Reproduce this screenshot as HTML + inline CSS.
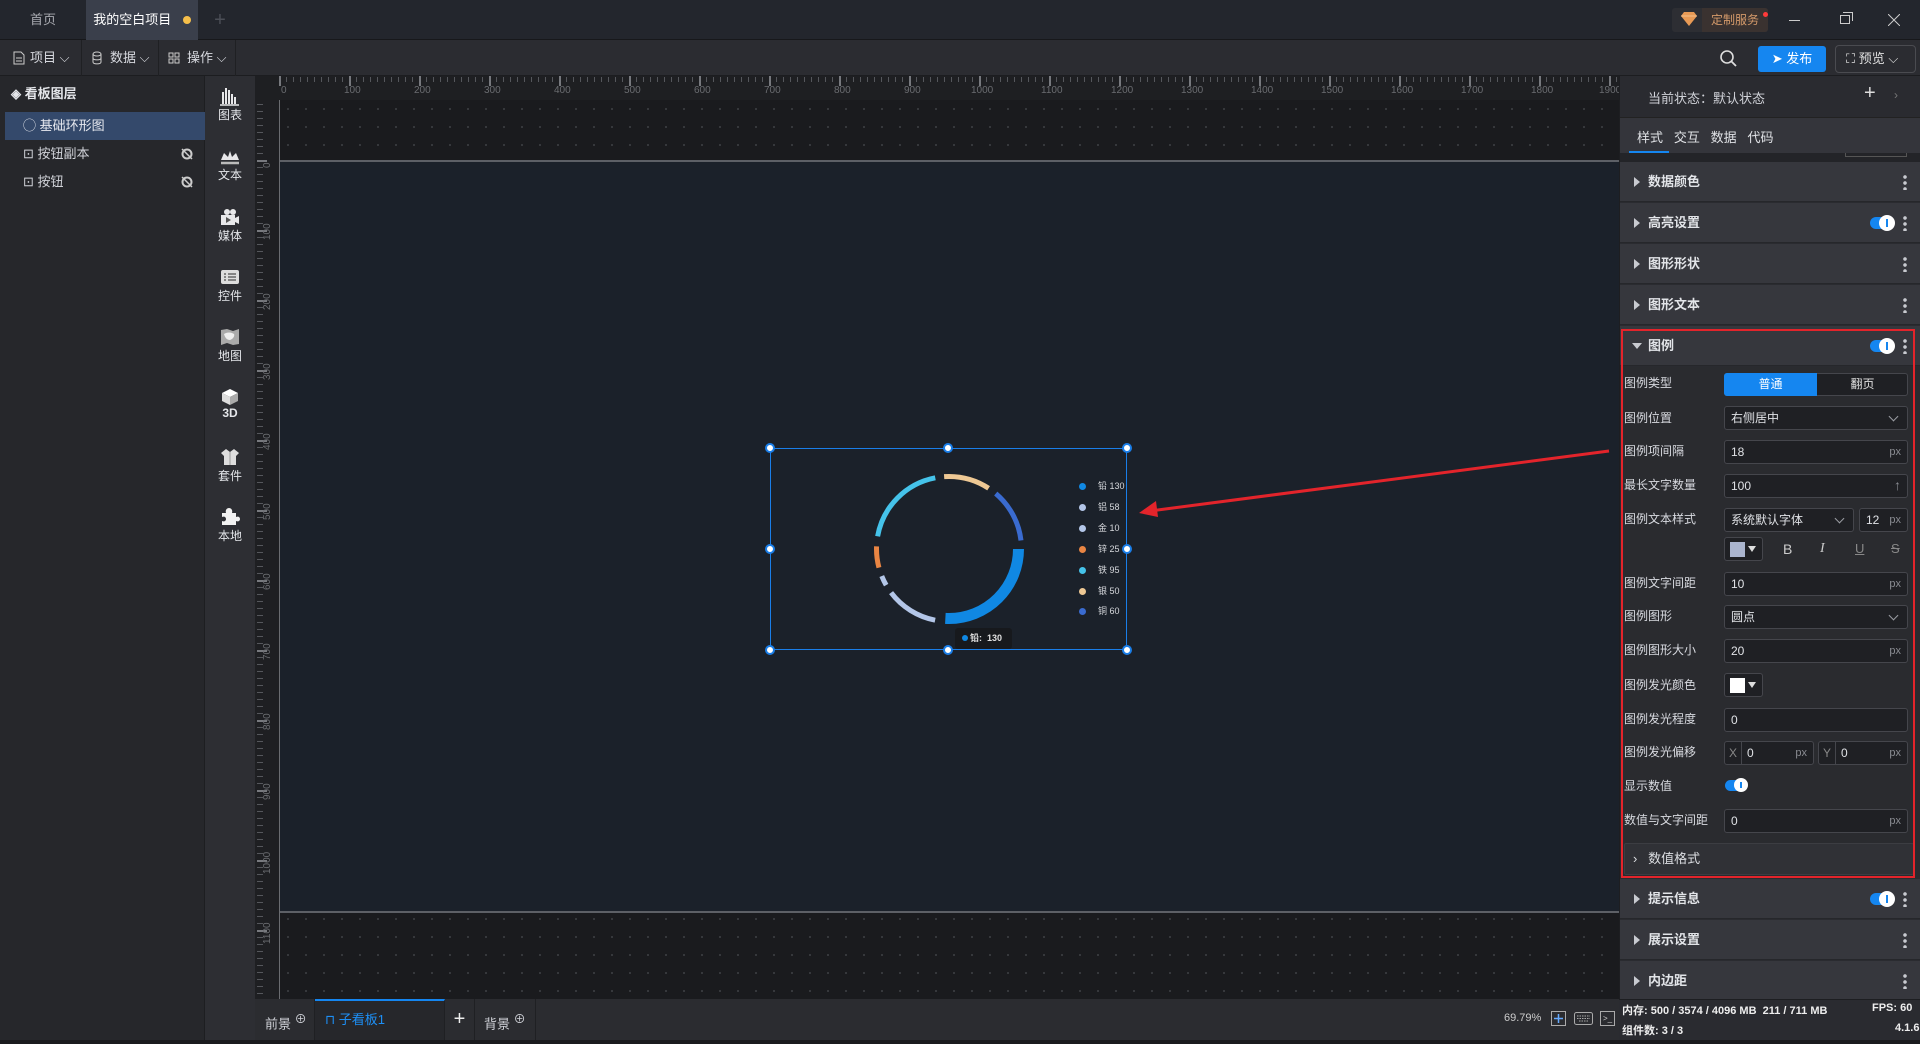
<!DOCTYPE html>
<html><head><meta charset="utf-8">
<style>
*{box-sizing:border-box;margin:0;padding:0}
body{width:1920px;height:1040px;overflow:hidden;background:#1a1b1e;font-family:"Liberation Sans","Noto Sans CJK SC",sans-serif;color:#d0d2d8;font-size:12px;position:relative}
.a{position:absolute}
.tb{left:0;top:0;width:1920px;height:40px;background:#23262d;border-bottom:1px solid #17181b}
.tab{top:0;height:40px;line-height:40px;font-size:13px;text-align:center}
.tool{left:0;top:40px;width:1920px;height:36px;background:#2b2c31;border-bottom:1px solid #1c1d20}
.tbtn{top:40px;height:36px;line-height:36px;font-size:13px;color:#d8dae0;border-right:1px solid #1f2023}
.lp{left:0;top:76px;width:205px;height:964px;background:#26272b;border-right:1px solid #1d1e21}
.row{left:5px;width:200px;height:28px;line-height:28px;font-size:13px}
.ic{left:205px;top:76px;width:50px;height:964px;background:#2d2e33}
.icl{left:205px;width:50px;text-align:center;font-size:12px;color:#e4e6ea}
.isv{position:absolute;left:220px}
.rp{left:1619px;top:76px;width:301px;height:923px;background:#2a2b30;border-left:1px solid #1d1e21}
.sec{left:1620px;width:300px;height:40px;background:#36373d;border-bottom:1px solid #26272b;font-size:13px;font-weight:bold;color:#e2e4e8;line-height:40px}
.sec .t{position:absolute;left:28px}
.tri{position:absolute;left:14px;top:15px;width:0;height:0;border-top:5px solid transparent;border-bottom:5px solid transparent;border-left:6px solid #c8cad0}
.dots{position:absolute;right:13px;top:12px;width:4px;height:16px;background:radial-gradient(circle,#c8cad0 1.6px,transparent 2px) 0 0/4px 6px repeat-y}
.tog{position:absolute;right:26px;top:14px;width:24px;height:12px;border-radius:6px;background:#1586f0}
.tog:after{content:"";position:absolute;right:-1px;top:-2px;width:16px;height:16px;border-radius:50%;background:#fff}
.tog b{position:absolute;right:6px;top:2px;width:2px;height:8px;background:#1586f0;z-index:2}
.lb{left:1624px;font-size:12px;color:#d8dae0;height:28px;line-height:28px}
.in{height:24px;border:1px solid #45464c;background:#1f2024;border-radius:3px;font-size:12px;color:#e0e2e6;line-height:22px;padding-left:6px}
.px{position:absolute;right:6px;top:0;color:#8a8c92;font-size:11px}
.chev{position:absolute;right:10px;top:6px;width:7px;height:7px;border-right:1px solid #9a9ca2;border-bottom:1px solid #9a9ca2;transform:rotate(45deg)}
.hr{left:279px;top:76px;width:1340px;height:24px;background:#1e1f22}
.vr{left:255px;top:76px;width:24px;height:923px;background:#1e1f22}
.hl{top:85px;font-size:10px;color:#6a6c70}
.vl{left:262px;font-size:10px;color:#6a6c70;transform:rotate(-90deg);transform-origin:left top}
.grid{background-color:#1a1b1e;background-image:radial-gradient(circle,#3a3c40 0.9px,transparent 1.2px);background-size:18px 18px}
.bb{left:255px;top:999px;width:1364px;height:41px;background:#2b2c30}
.st{left:1619px;top:999px;width:301px;height:41px;background:#2a2b30;border-top:1px solid #1d1e21;font-size:11px;font-weight:bold;color:#e8e8ea}
.lg{left:1079px;font-size:9px;color:#d6d8dc}
.lg i{display:inline-block;width:7px;height:7px;border-radius:50%;margin-right:12px;vertical-align:-1px}
.h{position:absolute;width:10px;height:10px;border-radius:50%;background:#fff;border:2px solid #1a7ee8}
</style></head><body>
<div class="a tb"></div>
<div class="a tab" style="left:0;width:86px;color:#a8aab0">首页</div>
<div class="a tab" style="left:86px;width:112px;background:#3a3f4b;color:#fff">我的空白项目 <span style="display:inline-block;width:8px;height:8px;border-radius:50%;background:#f6bf4a;margin-left:8px"></span></div>
<div class="a tab" style="left:205px;width:30px;color:#4b4e56;font-size:20px">+</div>
<div class="a" style="left:1672px;top:8px;width:96px;height:24px;border-radius:3px;background:#2d2e33"></div>
<div class="a" style="left:1702px;top:8px;width:66px;height:24px;background:#3a3230;border-radius:0 3px 3px 0;color:#d59a6a;font-size:12px;line-height:24px;text-align:center">定制服务</div>
<div class="a" style="left:1763px;top:12px;width:5px;height:5px;border-radius:50%;background:#ff3a3a"></div>
<svg class="a" style="left:1681px;top:12px" width="16" height="14"><path d="M3 0h10l3 4-8 10L0 4z" fill="#e89a55"/><path d="M0 4h16" stroke="#f4c08a"/></svg>
<div class="a" style="left:1789px;top:20px;width:11px;height:1px;background:#ccc"></div>
<div class="a" style="left:1840px;top:15px;width:10px;height:9px;border:1px solid #ccc"></div>
<div class="a" style="left:1843px;top:12px;width:10px;height:9px;border-top:1px solid #ccc;border-right:1px solid #ccc"></div>
<svg class="a" style="left:1888px;top:14px" width="12" height="12"><path d="M0 0L12 12M12 0L0 12" stroke="#ccc"/></svg>
<div class="a tool"></div>
<div class="a tbtn" style="left:0;width:82px;padding-left:30px">项目 ⌵</div>
<svg class="a" style="left:13px;top:51px" width="12" height="14"><path d="M1 1h7l3 3v9H1z M3 7h6M3 10h6" stroke="#ccc" fill="none"/></svg>
<div class="a tbtn" style="left:82px;width:77px;padding-left:28px">数据 ⌵</div>
<svg class="a" style="left:92px;top:51px" width="10" height="14"><ellipse cx="5" cy="3" rx="4" ry="2" stroke="#ccc" fill="none"/><path d="M1 3v8c0 2.5 8 2.5 8 0V3M1 7c0 2.5 8 2.5 8 0" stroke="#ccc" fill="none"/></svg>
<div class="a tbtn" style="left:159px;width:77px;padding-left:28px">操作 ⌵</div>
<svg class="a" style="left:168px;top:52px" width="12" height="12"><path d="M1 1h4v4H1zM7 1h4v4H7zM1 7h4v4H1zM7 7h4v4H7z" stroke="#ccc" fill="none"/></svg>
<svg class="a" style="left:1720px;top:50px" width="17" height="17"><circle cx="7" cy="7" r="6" stroke="#ddd" stroke-width="1.6" fill="none"/><path d="M11.5 11.5L16 16" stroke="#ddd" stroke-width="1.8"/></svg>
<div class="a" style="left:1758px;top:46px;width:68px;height:26px;background:#1586f0;border-radius:3px;color:#fff;font-size:13px;line-height:26px;text-align:center">➤ 发布</div>
<div class="a" style="left:1835px;top:45px;width:81px;height:28px;border:1px solid #4a4b50;border-radius:4px;color:#e0e0e0;font-size:13px;line-height:26px;padding-left:10px">⛶ 预览 ⌵</div>
<div class="a lp"></div>
<div class="a row" style="top:80px;font-weight:bold;color:#e4e6ea;padding-left:6px">◈ 看板图层</div>
<div class="a row" style="top:112px;background:#34496b;color:#e8eaf0;padding-left:18px">◯ 基础环形图</div>
<div class="a row" style="top:140px;padding-left:18px">⊡ 按钮副本</div>
<div class="a row" style="top:168px;padding-left:18px">⊡ 按钮</div>
<svg class="a" style="left:181px;top:148px" width="12" height="12"><circle cx="6" cy="6" r="4.5" stroke="#ccc" stroke-width="2" fill="none"/><path d="M1 1L11 11" stroke="#ccc" stroke-width="1.5"/></svg>
<svg class="a" style="left:181px;top:176px" width="12" height="12"><circle cx="6" cy="6" r="4.5" stroke="#ccc" stroke-width="2" fill="none"/><path d="M1 1L11 11" stroke="#ccc" stroke-width="1.5"/></svg>
<div class="a ic"></div>
<svg class="isv" style="top:88px" width="20" height="18"><path d="M2 4h2v12H2zM5 0h2v16H5zM8 2h2v14H8zM11 6h2v10h-2zM14 9h2v7h-2z" fill="#e8e8ea"/><path d="M0 17h19" stroke="#e8e8ea" stroke-width="1.5"/></svg>
<div class="a icl" style="top:106px">图表</div>
<svg class="isv" style="top:150px" width="20" height="16"><path d="M1 10L4 3l4 4 2-6 2 6 4-4 3 7z" fill="#e8e8ea"/><path d="M1 13h18" stroke="#bbb" stroke-width="2.5"/></svg>
<div class="a icl" style="top:166px">文本</div>
<svg class="isv" style="top:208px" width="20" height="18"><circle cx="7" cy="4" r="3" fill="#e8e8ea"/><circle cx="13" cy="4" r="3" fill="#e8e8ea"/><path d="M1 7h14v10H1zM15 10l4-2v8l-4-2z" fill="#e8e8ea"/><path d="M6 9v6l5-3z" fill="#555"/></svg>
<div class="a icl" style="top:227px">媒体</div>
<svg class="isv" style="top:269px" width="20" height="16"><rect x="1" y="1" width="18" height="14" rx="2" fill="#ddd"/><path d="M4 5h2M8 5h8M4 8h2M8 8h8M4 11h2M8 11h8" stroke="#666" stroke-width="1.5"/></svg>
<div class="a icl" style="top:287px">控件</div>
<svg class="isv" style="top:328px" width="20" height="18"><path d="M1 2l6-1 6 2 6-2v15l-6 1-6-2-6 2z" fill="#aaa"/><path d="M4 6c3-2 7-2 10 0 1 2-1 5-4 6-3 0-5-2-6-6z" fill="#eee"/></svg>
<div class="a icl" style="top:347px">地图</div>
<svg class="isv" style="top:388px" width="20" height="18"><path d="M10 1l8 4-8 4-8-4z" fill="#fff"/><path d="M2 5l8 4v8l-8-4z" fill="#ddd"/><path d="M18 5l-8 4v8l8-4z" fill="#aaa"/></svg>
<div class="a icl" style="top:406px;font-weight:bold">3D</div>
<svg class="isv" style="top:448px" width="20" height="18"><path d="M6 1l4 3 4-3 5 4-3 3v9H4V8L1 5z" fill="#ddd"/><path d="M10 4v13" stroke="#999"/></svg>
<div class="a icl" style="top:467px">套件</div>
<svg class="isv" style="top:508px" width="20" height="18"><path d="M2 5h4c-1-3 1-5 3-5s4 2 3 5h4v4c2-1 4 0 4 2s-2 3-4 2v4H2v-4c2 1 4 0 4-2s-2-3-4-2z" fill="#f2f2f2"/></svg>
<div class="a icl" style="top:527px">本地</div>
<div class="a grid" style="left:279px;top:100px;width:1340px;height:899px"></div>
<div class="a" style="left:279px;top:160px;width:1340px;height:753px;background:#1b212a;border-top:2px solid #5d6066;border-bottom:2px solid #5d6066"></div>
<div class="a" style="left:279px;top:100px;width:1px;height:899px;background:#6a6c70"></div>
<div class="a hr" style="background:#1e1f22 repeating-linear-gradient(90deg,#55575c 0 1px,transparent 1px 7px);background-size:70px 5px;background-repeat:repeat-x;background-position:0 1px"></div>
<div class="a" style="left:279px;top:76px;width:1340px;height:10px;background:repeating-linear-gradient(90deg,#77797e 0 2px,transparent 2px 70px)"></div>
<div class="a vr" style="background:#1e1f22 repeating-linear-gradient(180deg,#55575c 0 1px,transparent 1px 7px) 2px 0/6px 7px repeat-y"></div>
<div class="a" style="left:257px;top:160px;width:10px;height:839px;background:repeating-linear-gradient(180deg,#77797e 0 2px,transparent 2px 70px)"></div>
<div class="a" style="left:255px;top:76px;width:24px;height:24px;background:#1e1f22"></div>
<div class="a hl" style="left:281px">0</div><div class="a hl" style="left:344px">100</div><div class="a hl" style="left:414px">200</div><div class="a hl" style="left:484px">300</div><div class="a hl" style="left:554px">400</div><div class="a hl" style="left:624px">500</div><div class="a hl" style="left:694px">600</div><div class="a hl" style="left:764px">700</div><div class="a hl" style="left:834px">800</div><div class="a hl" style="left:904px">900</div><div class="a hl" style="left:971px">1000</div><div class="a hl" style="left:1041px">1100</div><div class="a hl" style="left:1111px">1200</div><div class="a hl" style="left:1181px">1300</div><div class="a hl" style="left:1251px">1400</div><div class="a hl" style="left:1321px">1500</div><div class="a hl" style="left:1391px">1600</div><div class="a hl" style="left:1461px">1700</div><div class="a hl" style="left:1531px">1800</div><div class="a hl" style="left:1599px">1900</div>
<div class="a vl" style="top:168px">0</div><div class="a vl" style="top:240px">100</div><div class="a vl" style="top:310px">200</div><div class="a vl" style="top:380px">300</div><div class="a vl" style="top:450px">400</div><div class="a vl" style="top:520px">500</div><div class="a vl" style="top:590px">600</div><div class="a vl" style="top:660px">700</div><div class="a vl" style="top:730px">800</div><div class="a vl" style="top:800px">900</div><div class="a vl" style="top:874px">1000</div><div class="a vl" style="top:944px">1100</div>
<div class="a" style="left:770px;top:448px;width:357px;height:202px;border:1.5px solid #1a7ee8"></div>
<div class="h" style="left:765px;top:443px"></div><div class="h" style="left:943px;top:443px"></div><div class="h" style="left:1122px;top:443px"></div>
<div class="h" style="left:765px;top:544px"></div><div class="h" style="left:1122px;top:544px"></div>
<div class="h" style="left:765px;top:645px"></div><div class="h" style="left:943px;top:645px"></div><div class="h" style="left:1122px;top:645px"></div>
<svg class="a" style="left:849px;top:449px" width="200" height="200">
<g fill="none">
<circle cx="100" cy="100" r="69.5" stroke="#1088e3" stroke-width="11" stroke-dasharray="112.8 500" stroke-dashoffset="0"/>
<circle cx="100" cy="100" r="72.5" stroke="#b3c6e8" stroke-width="5" stroke-dasharray="53.1 500" stroke-dashoffset="-127.8"/>
<circle cx="100" cy="100" r="72.5" stroke="#b3c6e8" stroke-width="5" stroke-dasharray="10.1 500" stroke-dashoffset="-189.8"/>
<circle cx="100" cy="100" r="72.5" stroke="#e98543" stroke-width="5" stroke-dasharray="21.5 500" stroke-dashoffset="-208.8"/>
<circle cx="100" cy="100" r="72.5" stroke="#45c3ea" stroke-width="5" stroke-dasharray="87.3 500" stroke-dashoffset="-240.4"/>
<circle cx="100" cy="100" r="72.5" stroke="#eec894" stroke-width="5" stroke-dasharray="46.8 500" stroke-dashoffset="-336.6"/>
<circle cx="100" cy="100" r="72.5" stroke="#3a6bd0" stroke-width="5" stroke-dasharray="54.4 500" stroke-dashoffset="-392.3"/>
</g></svg>
<div class="a lg" style="top:479px"><i style="background:#1088e3"></i>铅 130</div>
<div class="a lg" style="top:500px"><i style="background:#b3c6e8"></i>铝 58</div>
<div class="a lg" style="top:521px"><i style="background:#b3c6e8"></i>金 10</div>
<div class="a lg" style="top:542px"><i style="background:#e98543"></i>锌 25</div>
<div class="a lg" style="top:563px"><i style="background:#45c3ea"></i>铁 95</div>
<div class="a lg" style="top:584px"><i style="background:#eec894"></i>银 50</div>
<div class="a lg" style="top:604px"><i style="background:#3a6bd0"></i>铜 60</div>
<div class="a" style="left:955px;top:628px;width:57px;height:21px;background:#17191d;border-radius:3px;font-size:9px;font-weight:bold;color:#e0e0e0;line-height:21px;padding-left:7px"><span style="display:inline-block;width:6px;height:6px;border-radius:50%;background:#1088e3;margin-right:2px"></span>铅:&nbsp; 130</div>
<svg class="a" style="left:1130px;top:445px" width="490" height="80"><path d="M479 6L20 66" stroke="#e3242b" stroke-width="3"/><path d="M9 68L26 56L28 72z" fill="#e3242b"/></svg>
<div class="a bb"></div>
<div class="a" style="left:255px;top:999px;width:60px;height:41px;border-right:1px solid #1f2023;line-height:41px;font-size:13px;padding-left:10px">前景 <sup style="font-size:12px">⊕</sup></div>
<div class="a" style="left:315px;top:999px;width:130px;height:41px;border-top:2px solid #1586f0;border-right:1px solid #1f2023;line-height:38px;font-size:13px;padding-left:10px;color:#1d8ff5;background:#26272b">⊓ 子看板1</div>
<div class="a" style="left:445px;top:999px;width:30px;height:41px;border-right:1px solid #1f2023;line-height:41px;font-size:20px;text-align:center;color:#eee">+</div>
<div class="a" style="left:476px;top:999px;width:60px;height:41px;border-right:1px solid #1f2023;line-height:41px;font-size:13px;padding-left:8px">背景 <sup style="font-size:12px">⊕</sup></div>
<div class="a" style="left:1504px;top:1012px;font-size:11px;color:#ccc">69.79%</div>
<svg class="a" style="left:1551px;top:1011px" width="15" height="15"><rect x="0.5" y="0.5" width="14" height="14" fill="none" stroke="#aaa"/><path d="M7.5 3v9M3 7.5h9" stroke="#6af" stroke-width="1.5"/></svg>
<svg class="a" style="left:1574px;top:1012px" width="19" height="13"><rect x="0.5" y="0.5" width="18" height="12" rx="2" fill="none" stroke="#aaa"/><path d="M3 4h13M3 6.5h13M5 9h9" stroke="#aaa" stroke-dasharray="1.5 1"/></svg>
<div class="a" style="left:1600px;top:1011px;width:15px;height:15px;border:1px solid #aaa;font-size:8px;color:#ccc;line-height:13px;text-align:center">&gt;_</div>
<div class="a rp"></div>
<div class="a" style="left:1648px;top:88px;font-size:13px;color:#d0d2d8">当前状态：默认状态</div>
<div class="a" style="left:1864px;top:82px;font-size:20px;color:#ddd">+</div>
<div class="a" style="left:1894px;top:88px;font-size:12px;color:#777">›</div>
<div class="a" style="left:1620px;top:117px;width:300px;height:36px;background:#34353b;border-top:1px solid #222"></div>
<div class="a" style="left:1637px;top:127px;font-size:13px;color:#e0e2e6">样式 &nbsp;&nbsp;交互 &nbsp;&nbsp;数据 &nbsp;&nbsp;代码</div>
<div class="a" style="left:1629px;top:151px;width:40px;height:2px;background:#1586f0"></div>
<div class="a" style="left:1620px;top:153px;width:300px;height:9px;background:#232428"></div>
<div class="a" style="left:1845px;top:153px;width:62px;height:4px;border:1px solid #555;border-top:none"></div>
<div class="a sec" style="top:162px"><div class="tri"></div><span class="t">数据颜色</span><div class="dots"></div></div>
<div class="a sec" style="top:203px"><div class="tri"></div><span class="t">高亮设置</span><div class="tog"><b></b></div><div class="dots"></div></div>
<div class="a sec" style="top:244px"><div class="tri"></div><span class="t">图形形状</span><div class="dots"></div></div>
<div class="a sec" style="top:285px"><div class="tri"></div><span class="t">图形文本</span><div class="dots"></div></div>
<div class="a sec" style="top:326px"><div class="tri" style="border-left:5px solid transparent;border-right:5px solid transparent;border-top:6px solid #c8cad0;border-bottom:none;top:17px;left:12px"></div><span class="t">图例</span><div class="tog"><b></b></div><div class="dots"></div></div>
<div class="a" style="left:1620px;top:367px;width:300px;height:512px;background:#2a2b2f"></div>
<div class="a lb" style="top:369px">图例类型</div>
<div class="a" style="left:1724px;top:373px;width:184px;height:23px;border:1px solid #45464c;border-radius:3px;background:#1f2024"></div>
<div class="a" style="left:1724px;top:373px;width:93px;height:23px;background:#1586f0;border-radius:3px 0 0 3px;color:#fff;text-align:center;line-height:23px">普通</div>
<div class="a" style="left:1817px;top:373px;width:91px;height:23px;color:#e0e0e0;text-align:center;line-height:23px">翻页</div>
<div class="a lb" style="top:404px">图例位置</div><div class="a in" style="left:1724px;top:406px;width:184px">右侧居中<div class="chev"></div></div>
<div class="a lb" style="top:437px">图例项间隔</div><div class="a in" style="left:1724px;top:440px;width:184px">18<span class="px">px</span></div>
<div class="a lb" style="top:471px">最长文字数量</div><div class="a in" style="left:1724px;top:474px;width:184px">100<span class="px" style="font-size:14px;top:-1px">↑</span></div>
<div class="a lb" style="top:505px">图例文本样式</div><div class="a in" style="left:1724px;top:508px;width:130px">系统默认字体<div class="chev"></div></div><div class="a in" style="left:1859px;top:508px;width:49px">12<span class="px">px</span></div>
<div class="a" style="left:1724px;top:537px;width:39px;height:24px;border:1px solid #45464c;border-radius:3px;background:#1f2024"></div>
<div class="a" style="left:1730px;top:542px;width:15px;height:15px;background:#aab4ce"></div>
<div class="a" style="left:1748px;top:546px;width:0;height:0;border-left:4px solid transparent;border-right:4px solid transparent;border-top:6px solid #ddd"></div>
<div class="a" style="left:1783px;top:541px;font-size:14px;color:#ccc">B</div>
<div class="a" style="left:1820px;top:541px;font-size:14px;color:#ccc;font-style:italic;font-family:'Liberation Serif',serif">I</div>
<div class="a" style="left:1855px;top:541px;font-size:13px;color:#888;text-decoration:underline">U</div>
<div class="a" style="left:1891px;top:541px;font-size:13px;color:#888;text-decoration:line-through">S</div>
<div class="a lb" style="top:569px">图例文字间距</div><div class="a in" style="left:1724px;top:572px;width:184px">10<span class="px">px</span></div>
<div class="a lb" style="top:602px">图例图形</div><div class="a in" style="left:1724px;top:605px;width:184px">圆点<div class="chev"></div></div>
<div class="a lb" style="top:636px">图例图形大小</div><div class="a in" style="left:1724px;top:639px;width:184px">20<span class="px">px</span></div>
<div class="a lb" style="top:671px">图例发光颜色</div>
<div class="a" style="left:1724px;top:673px;width:39px;height:24px;border:1px solid #45464c;border-radius:3px;background:#1f2024"></div>
<div class="a" style="left:1730px;top:678px;width:15px;height:15px;background:#fff"></div>
<div class="a" style="left:1748px;top:682px;width:0;height:0;border-left:4px solid transparent;border-right:4px solid transparent;border-top:6px solid #ddd"></div>
<div class="a lb" style="top:705px">图例发光程度</div><div class="a in" style="left:1724px;top:708px;width:184px">0</div>
<div class="a lb" style="top:738px">图例发光偏移</div>
<div class="a in" style="left:1724px;top:741px;width:90px;padding-left:22px">0<span class="px">px</span><span style="position:absolute;left:0;top:0;width:17px;height:22px;border-right:1px solid #45464c;color:#888;text-align:center">X</span></div>
<div class="a in" style="left:1818px;top:741px;width:90px;padding-left:22px">0<span class="px">px</span><span style="position:absolute;left:0;top:0;width:17px;height:22px;border-right:1px solid #45464c;color:#888;text-align:center">Y</span></div>
<div class="a lb" style="top:772px">显示数值</div>
<div class="a" style="left:1725px;top:780px;width:22px;height:11px;border-radius:6px;background:#1586f0"></div>
<div class="a" style="left:1734px;top:778px;width:14px;height:14px;border-radius:50%;background:#fff"></div>
<div class="a" style="left:1740px;top:782px;width:2px;height:6px;background:#1586f0"></div>
<div class="a lb" style="top:806px">数值与文字间距</div><div class="a in" style="left:1724px;top:809px;width:184px">0<span class="px">px</span></div>
<div class="a" style="left:1624px;top:843px;width:290px;height:32px;border:1px solid #3c3d42;background:#303136;border-radius:2px;line-height:30px;padding-left:8px;font-size:13px;color:#dcdee2">›&nbsp;&nbsp; 数值格式</div>
<div class="a" style="left:1621px;top:329px;width:294px;height:549px;border:2px solid #e3242b"></div>
<div class="a sec" style="top:879px"><div class="tri"></div><span class="t">提示信息</span><div class="tog"><b></b></div><div class="dots"></div></div>
<div class="a sec" style="top:920px"><div class="tri"></div><span class="t">展示设置</span><div class="dots"></div></div>
<div class="a sec" style="top:961px"><div class="tri"></div><span class="t">内边距</span><div class="dots"></div></div>
<div class="a st"></div>
<div class="a" style="left:1622px;top:1002px;font-size:11px;font-weight:bold;color:#eee">内存: 500 / 3574 / 4096 MB&nbsp; 211 / 711 MB</div>
<div class="a" style="left:1872px;top:1002px;font-size:11px;font-weight:bold;color:#eee">FPS: 60</div>
<div class="a" style="left:1622px;top:1022px;font-size:11px;font-weight:bold;color:#eee">组件数: 3 / 3</div>
<div class="a" style="left:1895px;top:1022px;font-size:11px;font-weight:bold;color:#eee">4.1.6</div>
</body></html>
